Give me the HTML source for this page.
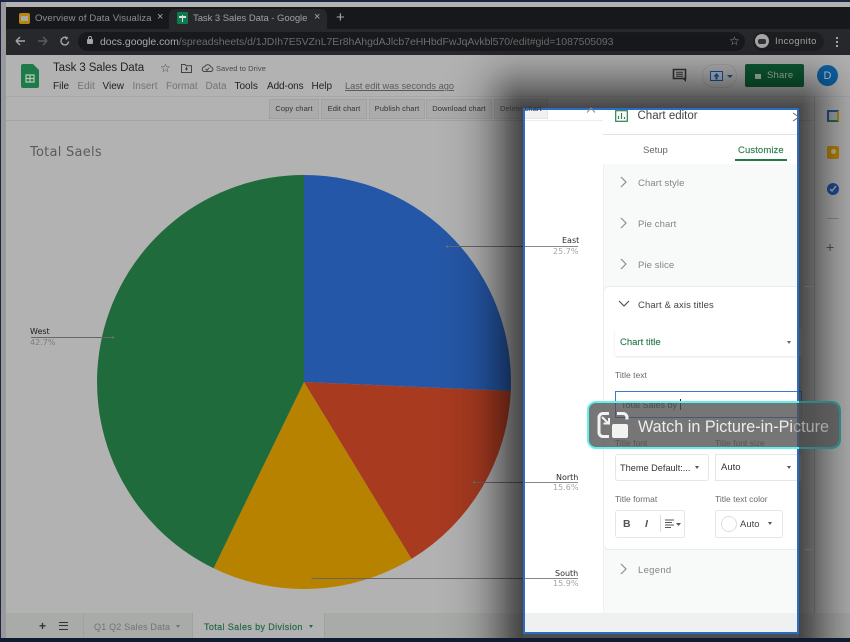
<!DOCTYPE html>
<html><head><meta charset="utf-8"><style>
*{box-sizing:border-box}
html,body{margin:0;padding:0;width:850px;height:642px;overflow:hidden;background:#b2b2b2;font-family:"Liberation Sans",sans-serif}
.a{position:absolute;white-space:nowrap}
#root{position:relative;width:850px;height:642px;overflow:hidden;background:#b2b2b2}
.dv{font-family:"DejaVu Sans",sans-serif}
.btn{position:absolute;top:99px;height:20px;background:#ababab;border:1px solid #a2a2a2;font-size:7.5px;line-height:18px;text-align:center;color:#333;letter-spacing:.1px}
.menu{position:absolute;top:81px;font-size:10px;color:#222}
.menu.d{color:#737373}
.sec{position:absolute;left:638px;font-size:9.5px;color:#858585;letter-spacing:.1px}
.lbl{position:absolute;font-size:8.5px;color:#6a6a6a}
.box{position:absolute;background:#fff;border:1px solid #e6e6e6;border-radius:3px}
</style></head><body><div id="root">
<!-- frame -->
<div class="a" style="left:0;top:0;width:850px;height:2px;background:#1b2647"></div>
<div class="a" style="left:0;top:0;width:1px;height:642px;background:#1b2647"></div>
<div class="a" style="left:1px;top:2px;width:5px;height:636px;background:#9a9a9a"></div>
<div class="a" style="left:6px;top:7px;width:844px;height:22px;background:#17181b"></div>
<div class="a" style="left:6px;top:29px;width:844px;height:26px;background:#27282b"></div>
<!-- tabs -->
<div class="a" style="left:169px;top:9px;width:158px;height:20px;background:#27282b;border-radius:6px 6px 0 0"></div>
<div class="a" style="left:19px;top:13px;width:11px;height:11px;background:#b8860b;border:2px solid #b8860b;border-radius:2px"><div style="background:#a8a8a8;width:7px;height:5px;margin-top:1px"></div></div>
<div class="a" style="left:35px;top:12.5px;font-size:9.500px;color:#8f8f8f;letter-spacing:.13px">Overview of Data Visualiza</div>
<div class="a" style="left:157px;top:11px;font-size:11px;color:#aaa">×</div>
<div class="a" style="left:177px;top:12px;width:11px;height:12px;background:#0e7a4d;border-radius:1px"></div>
<div class="a" style="left:179px;top:16px;width:7px;height:1.5px;background:#ddd"></div>
<div class="a" style="left:181.5px;top:15px;width:1.5px;height:7px;background:#ddd"></div>
<div class="a" style="left:193px;top:12.5px;font-size:9.500px;color:#a0a0a0;letter-spacing:-.05px">Task 3 Sales Data - Google</div>
<div class="a" style="left:314px;top:11px;font-size:11px;color:#aaa">×</div>
<div class="a" style="left:336px;top:9px;font-size:15px;color:#aaa">+</div>
<!-- toolbar -->
<svg class="a" style="left:14px;top:34px" width="60" height="14" fill="none" stroke-width="1.4">
<path d="M2 7h9M2 7l4-4M2 7l4 4" stroke="#a5a5a5"/><path d="M24 7h9M33 7l-4-4M33 7l-4 4" stroke="#5c5c5c"/>
<path d="M52 3.5a3.8 3.8 0 1 0 2.6 4" stroke="#a5a5a5"/><path d="M51 2l3.5 1.8-2.5 2.4z" fill="#a5a5a5"/></svg>
<div class="a" style="left:78px;top:32px;width:667px;height:19px;background:#18191c;border-radius:10px"></div>
<div class="a" style="left:87px;top:39px;width:6px;height:5px;background:#a5a5a5;border-radius:1px"></div>
<div class="a" style="left:88px;top:36px;width:4px;height:5px;border:1px solid #a5a5a5;border-radius:2px 2px 0 0"></div>
<div class="a" style="left:100px;top:35.5px;font-size:10.500px;color:#a8a8a8;letter-spacing:-.04px">docs.google.com<span style="color:#6c6c6c">/spreadsheets/d/1JDIh7E5VZnL7Er8hAhgdAJlcb7eHHbdFwJqAvkbl570/edit#gid=1087505093</span></div>
<div class="a" style="left:729px;top:34px;font-size:12px;color:#a5a5a5">☆</div>
<div class="a" style="left:753px;top:32px;width:71px;height:19px;background:#1d1e21;border-radius:10px"></div>
<div class="a" style="left:755px;top:34px;width:14px;height:14px;background:#a8a8a8;border-radius:50%"></div>
<div class="a" style="left:758px;top:39px;width:8px;height:5px;background:#333;border-radius:2px"></div>
<div class="a" style="left:775px;top:36px;font-size:9.500px;color:#a5a5a5;letter-spacing:.35px">Incognito</div>
<div class="a" style="left:836px;top:37px;width:2px;height:2px;background:#a5a5a5;box-shadow:0 4px #a5a5a5,0 8px #a5a5a5"></div>
<!-- sheets header -->
<div class="a" style="left:6px;top:55px;width:844px;height:42px;background:#b2b2b2"></div>
<div class="a" style="left:6px;top:96px;width:844px;height:1px;background:#a8a8a8"></div>
<svg class="a" style="left:21px;top:64px" width="18" height="24"><path d="M2 0h10l6 6v16a2 2 0 0 1-2 2H2a2 2 0 0 1-2-2V2a2 2 0 0 1 2-2z" fill="#1e7a46"/><path d="M5 11h8v7H5zM5 14.500h8M9 11v7" stroke="#b5c9bb" fill="none" stroke-width="1.200"/></svg>
<div class="a" style="left:53px;top:62px;font-size:11.500px;color:#232323;letter-spacing:-.1px">Task 3 Sales Data</div>
<div class="a" style="left:160px;top:61px;font-size:12px;color:#444">☆</div>
<svg class="a" style="left:180px;top:62px" width="50" height="13" fill="none" stroke="#444"><path d="M1.500 2.500h3.500l1.200 1.200h5.300v6.800h-10z"/><path d="M6.500 5v3.500M5 7h3" /><path d="M24 9.500h6.500a2.200 2.200 0 0 0 .4-4.400 3.300 3.300 0 0 0-6.200-.3 2.400 2.400 0 0 0-.7 4.700z"/><path d="M25.500 7l1.500 1.300 2-2.300"/></svg>
<div class="a" style="left:216px;top:63.500px;font-size:7.500px;color:#4a4a4a;letter-spacing:.05px">Saved to Drive</div>
<div class="menu" style="left:53px">File</div><div class="menu d" style="left:77.500px">Edit</div><div class="menu" style="left:102.500px">View</div><div class="menu d" style="left:132.500px">Insert</div><div class="menu d" style="left:166px">Format</div><div class="menu d" style="left:205.500px">Data</div><div class="menu" style="left:234.500px">Tools</div><div class="menu" style="left:267px;letter-spacing:-.1px">Add-ons</div><div class="menu" style="left:311.500px">Help</div>
<div class="a" style="left:345px;top:81px;font-size:9.250px;color:#5a5a5a;text-decoration:underline">Last edit was seconds ago</div>
<svg class="a" style="left:672px;top:68px" width="16" height="15"><path d="M1.500 1.500h12v9h-12z" fill="none" stroke="#333" stroke-width="1.600"/><path d="M4 4.200h7M4 6.200h7M4 8.200h7" stroke="#333"/><path d="M11 11h3v3z" fill="#333"/></svg>
<div class="a" style="left:702px;top:64px;width:35px;height:24px;border:1px solid #a4a4a4;border-radius:12px"></div>
<div class="a" style="left:710px;top:71px;width:13px;height:10px;background:#a9b8cc;border:1.500px solid #1b4f93"></div>
<svg class="a" style="left:713px;top:73px" width="8" height="7"><path d="M3.500 0L6.500 3.500H4.500V6.500H2.500V3.500H.5z" fill="#1b4f93"/></svg>
<div class="a" style="left:727px;top:75px;border:3px solid transparent;border-top:3px solid #1b4f93"></div>
<div class="a" style="left:745px;top:64px;width:59px;height:23px;background:#0c5a33;border-radius:2px"></div>
<div class="a" style="left:755px;top:74px;width:6px;height:5px;background:#a9b9af"></div>
<div class="a" style="left:767px;top:70px;font-size:9.500px;color:#a9bcb0;letter-spacing:.2px">Share</div>
<div class="a" style="left:817px;top:65px;width:21px;height:21px;background:#0b61a4;border-radius:50%;color:#b9c8d4;font-size:11px;text-align:center;line-height:22px">D</div>
<!-- chart toolbar -->
<div class="a" style="left:6px;top:120px;width:808px;height:1px;background:#a4a4a4"></div>
<div class="btn" style="left:269px;width:50px">Copy chart</div>
<div class="btn" style="left:321px;width:46px">Edit chart</div>
<div class="btn" style="left:369px;width:56px">Publish chart</div>
<div class="btn" style="left:426px;width:66px">Download chart</div>
<div class="btn" style="left:494px;width:54px"></div>
<!-- side -->
<div class="a" style="left:814px;top:97px;width:1px;height:541px;background:#989898"></div>
<div class="a" style="left:827px;top:110px;width:12px;height:12px;background:#28508f;border:2px solid #28508f;border-right-color:#a98a12;border-bottom-color:#1e7040"><div style="background:#9ea5ad;height:8px"></div></div>
<div class="a" style="left:827px;top:146px;width:12px;height:13px;background:#b8860b;border-radius:2px"><div style="background:#c9bd8a;width:5px;height:5px;border-radius:50%;margin:3px auto"></div></div>
<div class="a" style="left:827px;top:183px;width:12px;height:12px;background:#1f4f9a;border-radius:50%"><svg width="12" height="12" style="display:block"><path d="M3 6l2 2 4-5" stroke="#bbb" fill="none" stroke-width="1.400"/></svg></div>
<div class="a" style="left:827px;top:218px;width:12px;height:1px;background:#8e8e8e"></div>
<div class="a" style="left:826px;top:239px;font-size:14px;color:#555">+</div>
<div class="a" style="left:829px;top:614px;font-size:13px;color:#444;font-family:'DejaVu Sans',sans-serif">›</div>
<!-- chart -->
<div class="a dv" style="left:30px;top:145px;font-size:13px;color:#5b5b5b;letter-spacing:.25px">Total Saels</div>
<svg class="a" style="left:0;top:0" width="850" height="642">
<path d="M304 382V175A207 207 0 0 1 510.800 391Z" fill="#2457a7"/>
<path d="M304 382L510.800 391A207 207 0 0 1 411.500 558.900Z" fill="#a83a20"/>
<path d="M304 382L411.500 558.900A207 207 0 0 1 213.600 568.200Z" fill="#b78200"/>
<path d="M304 382L213.600 568.200A207 207 0 0 1 304 175Z" fill="#1f6b3b"/>
<g stroke="#666" stroke-width="1"><path d="M447 246.500H578M474 482.500H578M312 578.500H578M31 337.500H113"/></g>
<g fill="#777"><circle cx="447" cy="246.500" r="1"/><circle cx="474" cy="482.500" r="1"/><circle cx="312" cy="578.500" r="1"/><circle cx="113" cy="337.500" r="1"/></g>
</svg>
<div class="a dv" style="left:30px;top:327px;font-size:8px;color:#1c1c1c">West</div>
<div class="a dv" style="left:30px;top:337.500px;font-size:8px;color:#7d7d7d">42.7%</div>
<!-- bottom bar -->
<div class="a" style="left:6px;top:613px;width:844px;height:25px;background:#a9aba9"></div>
<div class="a" style="left:39px;top:619px;font-size:12px;font-weight:bold;color:#333">+</div>
<div class="a" style="left:59px;top:622px;width:9px;height:8px;border-top:1px solid #333;border-bottom:1px solid #333"><div style="height:1px;background:#333;margin-top:2px"></div></div>
<div class="a" style="left:83px;top:613px;width:110px;height:25px;border-left:1px solid #a0a2a0;border-right:1px solid #a0a2a0"></div>
<div class="a" style="left:94px;top:622px;font-size:9px;color:#727272;letter-spacing:.2px">Q1 Q2 Sales Data</div>
<div class="a" style="left:176px;top:625px;border:2.500px solid transparent;border-top:3px solid #727272"></div>
<div class="a" style="left:193px;top:613px;width:132px;height:25px;background:#b2b2b2;border-right:1px solid #a0a2a0"></div>
<div class="a" style="left:204px;top:622px;font-size:9px;color:#266a43;letter-spacing:.38px;-webkit-text-stroke:.2px #266a43">Total Sales by Division</div>
<div class="a" style="left:309px;top:625px;border:2.500px solid transparent;border-top:3px solid #266a43"></div>
<!-- shadow over page (explicit gradients) -->
<div class="a" style="left:433px;top:108px;width:90px;height:530px;background:linear-gradient(to left,rgba(0,0,0,.6) 0,rgba(0,0,0,.48) 12px,rgba(0,0,0,.33) 24px,rgba(0,0,0,.2) 36px,rgba(0,0,0,.1) 48px,rgba(0,0,0,.05) 60px,rgba(0,0,0,.02) 72px,rgba(0,0,0,0) 90px)"></div>
<div class="a" style="left:799px;top:108px;width:51px;height:530px;background:linear-gradient(to right,rgba(0,0,0,.6) 0,rgba(0,0,0,.48) 12px,rgba(0,0,0,.33) 24px,rgba(0,0,0,.2) 36px,rgba(0,0,0,.1) 48px,rgba(0,0,0,.09) 51px)"></div>
<div class="a" style="left:523px;top:18px;width:276px;height:90px;background:linear-gradient(to top,rgba(0,0,0,.6) 0,rgba(0,0,0,.48) 12px,rgba(0,0,0,.33) 24px,rgba(0,0,0,.2) 36px,rgba(0,0,0,.1) 48px,rgba(0,0,0,.05) 60px,rgba(0,0,0,.02) 72px,rgba(0,0,0,0) 90px)"></div>
<div class="a" style="left:433px;top:18px;width:90px;height:90px;background:radial-gradient(circle 90px at 100% 100%,rgba(0,0,0,.6) 0,rgba(0,0,0,.48) 12px,rgba(0,0,0,.33) 24px,rgba(0,0,0,.2) 36px,rgba(0,0,0,.1) 48px,rgba(0,0,0,.05) 60px,rgba(0,0,0,.02) 72px,rgba(0,0,0,0) 90px)"></div>
<div class="a" style="left:799px;top:18px;width:51px;height:90px;background:radial-gradient(circle 90px at 0 100%,rgba(0,0,0,.6) 0,rgba(0,0,0,.48) 12px,rgba(0,0,0,.33) 24px,rgba(0,0,0,.2) 36px,rgba(0,0,0,.1) 48px,rgba(0,0,0,.05) 60px,rgba(0,0,0,.02) 72px,rgba(0,0,0,0) 90px)"></div>
<div class="a" style="left:523px;top:634px;width:276px;height:4px;background:rgba(0,0,0,.55)"></div>
<div class="a" style="left:0;top:638px;width:850px;height:4px;background:#101a33"></div>
<!-- pieces overflowing the panel -->
<div class="a" style="left:790px;top:391px;width:12px;height:27px;border:1px solid #1c3a63;border-left:0"></div>
<div class="a" style="left:790px;top:329px;width:12px;height:27px;background:#505050;border-radius:2px"></div>
<div class="a" style="left:790px;top:454px;width:12px;height:27px;background:#525252;border-radius:2px"></div>
<div class="a" style="left:805px;top:286px;width:9px;height:264px;border-top:1px solid #666;border-bottom:1px solid #666"></div>
<!-- panel -->
<div class="a" style="left:523px;top:108px;width:276px;height:526px;background:#fff;border:2px solid #2a6cc4;overflow:hidden"></div>
<div class="a" style="left:525px;top:110px;width:272px;height:522px;overflow:hidden">
 <div class="a" style="left:0;top:0;width:23px;height:9px;background:#f1f1f1;border-right:1px solid #e4e4e4;border-bottom:1px solid #e4e4e4"></div>
 <div class="a" style="left:0;top:10px;width:78px;height:1px;background:#ececec"></div>
 <div class="a" style="left:0;top:503px;width:272px;height:19px;background:#eff0f0"></div>
 <div class="a" style="left:78px;top:0;width:194px;height:503px;background:#f8f9f9;border-left:1px solid #f0f0f0"></div>
 <div class="a" style="left:78px;top:0;width:194px;height:54px;background:#fff"></div>
 <div class="a" style="left:78px;top:24px;width:194px;height:1px;background:#e2e2e2"></div>
 <div class="a" style="left:78px;top:176px;width:194px;height:264px;background:#fff;border:1px solid #ececec;border-right:0;border-radius:6px 0 0 6px"></div>
</div>
<div class="a" style="left:500px;top:104px;font-size:7.500px;color:#333;letter-spacing:.1px">Delete chart</div>
<svg class="a" style="left:586px;top:106px" width="10" height="8"><path d="M1 6.500L5 2l4 4.500" stroke="#888" fill="none"/></svg>
<svg class="a" style="left:615px;top:110px" width="13" height="12"><rect x=".7" y=".7" width="11.600" height="10.600" fill="none" stroke="#2e8050" stroke-width="1.200"/><path d="M3.500 9V6M6.500 9V3M9.500 9V7" stroke="#2e8050" stroke-width="1.200"/></svg>
<div class="a" style="left:637.500px;top:110px;font-size:11.500px;color:#444">Chart editor</div>
<svg class="a" style="left:792px;top:112px" width="10" height="10"><path d="M1 1l6 4-6 4" stroke="#666" fill="none"/></svg>
<div class="a" style="left:643px;top:145px;font-size:9.500px;color:#666">Setup</div>
<div class="a" style="left:738px;top:145px;font-size:9.500px;color:#2d7d4f;letter-spacing:.1px;-webkit-text-stroke:.15px #2d7d4f">Customize</div>
<div class="a" style="left:735px;top:159px;width:52px;height:2px;background:#1f7a45"></div>
<!-- accordion -->
<svg class="a" style="left:618px;top:175px" width="12" height="410" fill="none" stroke="#8c8c8c" stroke-width="1.200">
<path d="M3 2l5 5-5 5M3 43l5 5-5 5M3 84l5 5-5 5"/><path d="M1 126l5 5 5-5" stroke="#555"/><path d="M3 389l5 5-5 5"/></svg>
<div class="sec" style="top:178px">Chart style</div>
<div class="sec" style="top:219px">Pie chart</div>
<div class="sec" style="top:260px">Pie slice</div>
<div class="sec" style="top:300px;color:#444">Chart &amp; axis titles</div>
<div class="sec" style="top:565px;letter-spacing:.3px">Legend</div>
<div class="a" style="left:615px;top:329px;width:182px;height:27px;background:#fff;box-shadow:0 1px 2px rgba(0,0,0,.1)"></div>
<div class="a" style="left:620px;top:337px;font-size:9.500px;color:#2d7d4f;-webkit-text-stroke:.15px #2d7d4f">Chart title</div>
<div class="a" style="left:787px;top:341px;border:2.500px solid transparent;border-top:3px solid #666"></div>
<div class="lbl" style="left:615px;top:370px">Title text</div>
<div class="a" style="left:615px;top:391px;width:182px;height:27px;border:1px solid #3a78c8;border-right:0;background:#fff"></div>
<div class="a" style="left:621px;top:399.500px;font-size:9px;color:#444">Total Sales by</div>
<div class="a" style="left:680px;top:399px;width:1px;height:11px;background:#222"></div>
<div class="lbl" style="left:615px;top:438px">Title font</div>
<div class="lbl" style="left:715px;top:438px">Title font size</div>
<div class="box" style="left:615px;top:454px;width:94px;height:27px"></div>
<div class="a" style="left:620px;top:462.500px;font-size:9.200px;color:#333">Theme Default:...</div>
<div class="a" style="left:695px;top:466px;border:2.500px solid transparent;border-top:3px solid #555"></div>
<div class="a" style="left:715px;top:454px;width:82px;height:27px;background:#fff;border:1px solid #e6e6e6;border-right:0"></div>
<div class="a" style="left:721px;top:462px;font-size:9.500px;color:#333">Auto</div>
<div class="a" style="left:787px;top:466px;border:2.500px solid transparent;border-top:3px solid #555"></div>
<div class="lbl" style="left:615px;top:494px">Title format</div>
<div class="lbl" style="left:715px;top:494px">Title text color</div>
<div class="box" style="left:615px;top:510px;width:70px;height:28px"></div>
<div class="a" style="left:623px;top:518px;font-size:10.500px;font-weight:bold;color:#555">B</div>
<div class="a" style="left:645px;top:518px;font-size:10.500px;font-style:italic;font-weight:bold;color:#555">I</div>
<div class="a" style="left:660px;top:515px;width:1px;height:17px;background:#ddd"></div>
<svg class="a" style="left:665px;top:519px" width="17" height="10"><path d="M0 1h9M0 3.500h7M0 6h9M0 8.500h6" stroke="#555"/><path d="M11 4h5l-2.500 3z" fill="#555"/></svg>
<div class="box" style="left:715px;top:510px;width:68px;height:28px"></div>
<div class="a" style="left:721px;top:516px;width:16px;height:16px;background:#fff;border:1px solid #ddd;border-radius:50%"></div>
<div class="a" style="left:740px;top:519px;font-size:9.500px;color:#444">Auto</div>
<div class="a" style="left:768px;top:522px;border:2.500px solid transparent;border-top:3px solid #555"></div>
<!-- labels in panel -->
<div class="a" style="left:525px;top:246px;width:53px;height:1px;background:#888"></div>
<div class="a" style="left:525px;top:482px;width:53px;height:1px;background:#888"></div>
<div class="a" style="left:525px;top:578px;width:53px;height:1px;background:#888"></div>
<div class="a dv" style="left:562px;top:236px;font-size:8px;color:#2c2c2c">East</div>
<div class="a dv" style="left:553px;top:246.500px;font-size:8px;color:#a4a4a4">25.7%</div>
<div class="a dv" style="left:556px;top:472.500px;font-size:8px;color:#2c2c2c">North</div>
<div class="a dv" style="left:553px;top:482.500px;font-size:8px;color:#a4a4a4">15.6%</div>
<div class="a dv" style="left:555px;top:568.500px;font-size:8px;color:#2c2c2c">South</div>
<div class="a dv" style="left:553px;top:578.500px;font-size:8px;color:#a4a4a4">15.9%</div>
<!-- PiP -->
<div class="a" style="left:587px;top:401px;width:254px;height:48px;background:rgba(80,80,80,.78);border:2px solid #62f0ee;border-radius:9px"></div>
<div class="a" style="left:799px;top:401px;width:42px;height:48px;border:2px solid #2f8583;border-left:0;border-radius:0 9px 9px 0"></div>
<svg class="a" style="left:597px;top:411px" width="32" height="28" fill="none"><path d="M12 2.500H6a4 4 0 0 0-4 4v15a4 4 0 0 0 4 4h6M20 2.500h6a4 4 0 0 1 4 4v2" stroke="#f2f2f2" stroke-width="3"/><rect x="15" y="13" width="16" height="14" rx="2" fill="#f2f2f2"/><path d="M5 6l7 7M6.500 12.500H12V7" stroke="#f2f2f2" stroke-width="2"/></svg>
<div class="a" style="left:638px;top:417.500px;font-size:16.200px;color:#ececec">Watch in Picture-in-Pi<span style="color:#a8a8a8">cture</span></div>
</div></body></html>
